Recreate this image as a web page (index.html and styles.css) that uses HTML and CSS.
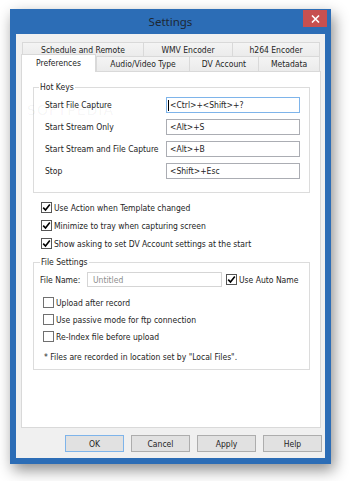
FILE: index.html
```html
<!DOCTYPE html>
<html>
<head>
<meta charset="utf-8">
<link rel="stylesheet" href="styles.css">
</head>
<body>
<div class="window">
  <div class="titlebar">
    <span class="title">Settings</span>
    <div class="close"><svg width="9" height="8" viewBox="0 0 9 8"><path d="M1 0.5 L8 7.5 M8 0.5 L1 7.5" stroke="#fff" stroke-width="1.6"/></svg></div>
  </div>
  <div class="client">
    <div class="tabs">
      <div class="tabrow back">
        <div class="tab w121">Schedule and Remote</div>
        <div class="tab w89">WMV Encoder</div>
        <div class="tab w88 last">h264 Encoder</div>
      </div>
      <div class="tabrow front">
        <div class="tab selected">Preferences</div>
        <div class="tab w93">Audio/Video Type</div>
        <div class="tab w69">DV Account</div>
        <div class="tab w62 last">Metadata</div>
      </div>
    </div>
    <div class="panel">
      <div class="watermark">SOFTPEDIA<sup>™</sup></div>
      <div class="group hotkeys">
        <div class="legend">Hot Keys</div>
        <div class="hk-row"><span>Start File Capture</span><div class="field focused"><span class="caret"></span>&lt;Ctrl&gt;+&lt;Shift&gt;+?</div></div>
        <div class="hk-row"><span>Start Stream Only</span><div class="field">&lt;Alt&gt;+S</div></div>
        <div class="hk-row"><span>Start Stream and File Capture</span><div class="field">&lt;Alt&gt;+B</div></div>
        <div class="hk-row"><span>Stop</span><div class="field">&lt;Shift&gt;+Esc</div></div>
      </div>
      <div class="checks main">
        <div class="check"><span class="box on"><svg width="9" height="9" viewBox="0 0 9 9"><path d="M1.2 4.6 L3.5 7 L7.8 1.6" fill="none" stroke="#000" stroke-width="1.6"/></svg></span>Use Action when Template changed</div>
        <div class="check"><span class="box on"><svg width="9" height="9" viewBox="0 0 9 9"><path d="M1.2 4.6 L3.5 7 L7.8 1.6" fill="none" stroke="#000" stroke-width="1.6"/></svg></span>Minimize to tray when capturing screen</div>
        <div class="check"><span class="box on"><svg width="9" height="9" viewBox="0 0 9 9"><path d="M1.2 4.6 L3.5 7 L7.8 1.6" fill="none" stroke="#000" stroke-width="1.6"/></svg></span>Show asking to set DV Account settings at the start</div>
      </div>
      <div class="group filesettings">
        <div class="legend">File Settings</div>
        <div class="fn-row">
          <span class="fn-label">File Name:</span>
          <div class="field disabled">Untitled</div>
          <div class="check auto"><span class="box on"><svg width="9" height="9" viewBox="0 0 9 9"><path d="M1.2 4.6 L3.5 7 L7.8 1.6" fill="none" stroke="#000" stroke-width="1.6"/></svg></span>Use Auto Name</div>
        </div>
        <div class="checks sub">
          <div class="check"><span class="box"></span>Upload after record</div>
          <div class="check"><span class="box"></span>Use passive mode for ftp connection</div>
          <div class="check"><span class="box"></span>Re-Index file before upload</div>
        </div>
        <div class="note">* Files are recorded in location set by "Local Files".</div>
      </div>
    </div>
    <div class="buttons">
      <div class="btn default">OK</div>
      <div class="btn">Cancel</div>
      <div class="btn">Apply</div>
      <div class="btn">Help</div>
    </div>
  </div>
</div>
</body>
</html>
```
FILE: styles.css
```css
* { box-sizing: border-box; }
body {
  margin: 0;
  width: 350px;
  height: 481px;
  overflow: hidden;
  background: #fff;
  font-family: "DejaVu Sans Condensed", "Liberation Sans", sans-serif;
  font-size: 8.5px;
  color: #242424;
}
.window {
  margin: 9px 0 0 10px;
  width: 321px;
  height: 455px;
  background: #2c6db6;
  padding: 0 6px 6px 6px;
  display: flex;
  flex-direction: column;
  box-shadow: 3px 6px 14px rgba(0,0,0,0.45);
}
.titlebar {
  height: 25px;
  display: grid;
  grid-template-columns: 1fr auto 1fr;
  align-items: start;
}
.title {
  grid-column: 2;
  font-family: "Noto Sans", "Open Sans", sans-serif;
  font-size: 11.5px;
  line-height: 25px;
  color: #1d2733;
}
.close {
  grid-column: 3;
  justify-self: end;
  width: 24px;
  height: 17px;
  margin-top: 1px;
  margin-right: -2px;
  background: #c75050;
  display: flex;
  align-items: center;
  justify-content: center;
}
.client {
  flex: 1;
  background: #f0f0f0;
  padding: 8px 4px 6px 5px;
  display: flex;
  flex-direction: column;
}
.tabs { height: 29px; }
.tabrow { display: flex; align-items: flex-start; }
.tabrow.back { height: 14px; margin-left: 1px; }
.tabrow.front { height: 15px; }
.tab {
  height: 100%;
  border: 1px solid #d9d9d9;
  border-right: none;
  border-bottom: none;
  background: linear-gradient(#f4f4f4, #ebebeb);
  display: flex;
  align-items: center;
  justify-content: center;
  white-space: nowrap;
}
.tab.last { border-right: 1px solid #d9d9d9; }
.w121 { width: 121px; }
.w89 { width: 89px; }
.w88 { width: 88px; }
.w93 { width: 93px; }
.w69 { width: 69px; }
.w62 { width: 62px; }
.tab.selected {
  width: 75px;
  height: 18px;
  margin-top: -2px;
  margin-bottom: -1px;
  background: #fff;
  border-right: 1px solid #d9d9d9;
  position: relative;
  z-index: 1;
  padding-bottom: 1px;
}
.panel {
  height: 357px;
  background: #fff;
  border: 1px solid #d9d9d9;
  padding: 15px 10px 0 11px;
  position: relative;
}
.watermark {
  position: absolute;
  left: 5px;
  top: 30px;
  font-family: "DejaVu Sans", sans-serif;
  font-size: 14px;
  letter-spacing: 1px;
  color: rgba(0,0,0,0.05);
}
.watermark sup { font-size: 6px; }
.group {
  border: 1px solid #dcdcdc;
}
.legend {
  width: fit-content;
  line-height: 12px;
  height: 12px;
  margin-top: -7px;
  padding: 0 1px;
  background: #fff;
  position: relative;
}
.hotkeys { padding: 0 9px 13px 11px; }
.hotkeys .legend { margin-left: -6px; }
.hk-row {
  display: flex;
  align-items: center;
  justify-content: space-between;
  height: 16px;
  margin-top: 6px;
}
.legend + .hk-row { margin-top: 4px; }
.field {
  width: 134px;
  height: 16px;
  border: 1px solid #abadb3;
  padding-left: 3px;
  display: flex;
  align-items: center;
  background: #fff;
  white-space: nowrap;
}
.field.focused { border-color: #7eb4ea; padding-left: 1px; }
.caret {
  width: 1px;
  height: 11px;
  background: #000;
  margin-right: 1px;
}
.checks.main {
  padding-left: 8px;
  margin-top: 8px;
  margin-bottom: 12px;
}
.check {
  display: flex;
  align-items: center;
  height: 13px;
  white-space: nowrap;
}
.checks.main .check + .check { margin-top: 5px; }
.box {
  width: 11px;
  height: 11px;
  border: 1px solid #555;
  background: #fff;
  margin-right: 2px;
  display: flex;
  align-items: center;
  justify-content: center;
  flex: none;
}
.filesettings { padding: 0 6px 5px 6px; }
.fn-row {
  display: flex;
  align-items: center;
  margin-top: 4px;
  height: 15px;
}
.fn-label { width: 47px; }
.field.disabled {
  width: 135px;
  height: 15px;
  border-color: #d5d5d5;
  color: #8d8d8d;
  padding-left: 5px;
}
.check.auto { margin-left: 4px; }
.checks.sub {
  margin-top: 9px;
  padding-left: 3px;
}
.checks.sub .check + .check { margin-top: 4px; }
.checks.sub .box { border-color: #707070; }
.note {
  margin-top: 8px;
  margin-left: 4px;
  height: 13px;
  line-height: 13px;
}
.buttons {
  display: flex;
  justify-content: flex-end;
  gap: 7px;
  margin-top: 7px;
  margin-right: -1px;
}
.btn {
  width: 59px;
  height: 17px;
  background: #e1e1e1;
  border: 1px solid #adadad;
  display: flex;
  align-items: center;
  justify-content: center;
}
.btn.default { border-color: #7eb4ea; }
```
